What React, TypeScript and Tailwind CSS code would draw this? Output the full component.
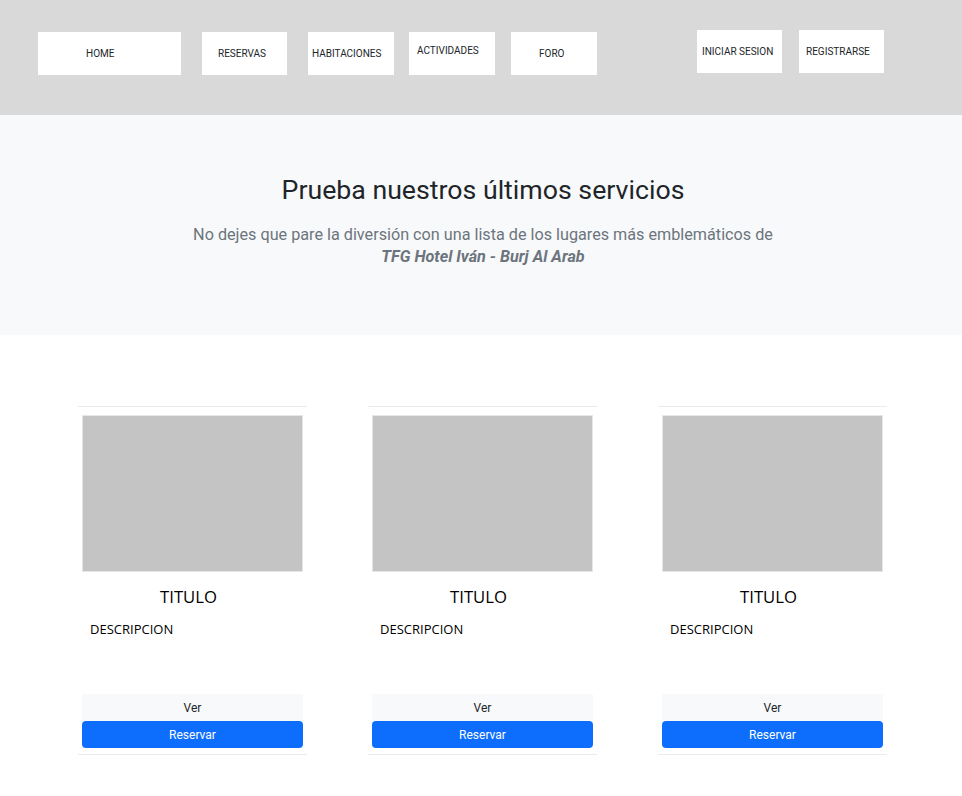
import React from 'react';

const navItems = [
  { label: 'HOME', box: 'ml-[38px] w-[143px] pl-[48px]' },
  { label: 'RESERVAS', box: 'ml-[21px] w-[85px] pl-[16px]' },
  { label: 'HABITACIONES', box: 'ml-[21px] w-[86px] pl-[4px]' },
  { label: 'ACTIVIDADES', box: 'ml-[15px] w-[86px] pl-[8px] pb-[7px]' },
  { label: 'FORO', box: 'ml-[16px] w-[86px] pl-[28px]' },
];

const authItems = [
  { label: 'INICIAR SESION', box: 'ml-[100px] w-[85px] pl-[5px]' },
  { label: 'REGISTRARSE', box: 'ml-[17px] w-[85px] pl-[7px]' },
];

const ServiceCard: React.FC = () => {
  return (
    <div className="w-[229px] border-y border-[#e9ecef] px-1 pt-[8px] pb-[6px] flex flex-col">
      {/* Image placeholder */}
      <div className="h-[157px] bg-[#c4c4c4] border border-[#e6e6e6]"></div>

      {/* Title */}
      <h3 className="mt-[13px] h-[24px] leading-[24px] pr-[8px] text-center text-[16.7px] text-black font-['Open_Sans',sans-serif]">
        TITULO
      </h3>

      {/* Description */}
      <p className="mt-[10px] h-[20px] leading-[20px] pl-[8px] text-[13px] text-black font-['Open_Sans',sans-serif]">
        DESCRIPCION
      </p>

      {/* Buttons */}
      <div className="mt-[55px] flex flex-col font-['Roboto',sans-serif] text-[12px]">
        <button className="h-[27px] bg-[#f8f9fa] text-[#212529]">Ver</button>
        <button className="h-[27px] bg-[#0d6efd] text-white rounded-[4px]">Reservar</button>
      </div>
    </div>
  );
};

export default function App() {
  return (
    <div className="w-[962px] min-h-[796px] bg-white">
      {/* Header */}
      <header className="h-[115px] bg-[#d9d9d9] flex items-start font-['Roboto',sans-serif] text-[10px] text-[#212529]">
        <div className="flex mt-[32px]">
          {navItems.map((item) => (
            <div key={item.label} className={`${item.box} h-[43px] bg-white flex items-center whitespace-nowrap`}>
              {item.label}
            </div>
          ))}
        </div>
        <div className="flex mt-[30px]">
          {authItems.map((item) => (
            <div key={item.label} className={`${item.box} h-[43px] bg-white flex items-center whitespace-nowrap`}>
              {item.label}
            </div>
          ))}
        </div>
      </header>

      {/* Hero */}
      <section className="h-[220px] bg-[#f8f9fa] pt-[59px] pl-[4px] text-center font-['Roboto',sans-serif]">
        <h1 className="text-[26.7px] leading-[32px] text-[#212529]">Prueba nuestros últimos servicios</h1>
        <p className="mt-[18px] text-[16.2px] leading-[22px] text-[#6c757d]">
          No dejes que pare la diversión con una lista de los lugares más emblemáticos de
          <br />
          <strong className="italic font-bold">TFG Hotel Iván - Burj Al Arab</strong>
        </p>
      </section>

      {/* Cards */}
      <section className="pt-[71px] pb-[40px] pl-[78px] flex gap-[61px]">
        <ServiceCard />
        <ServiceCard />
        <ServiceCard />
      </section>
    </div>
  );
}
